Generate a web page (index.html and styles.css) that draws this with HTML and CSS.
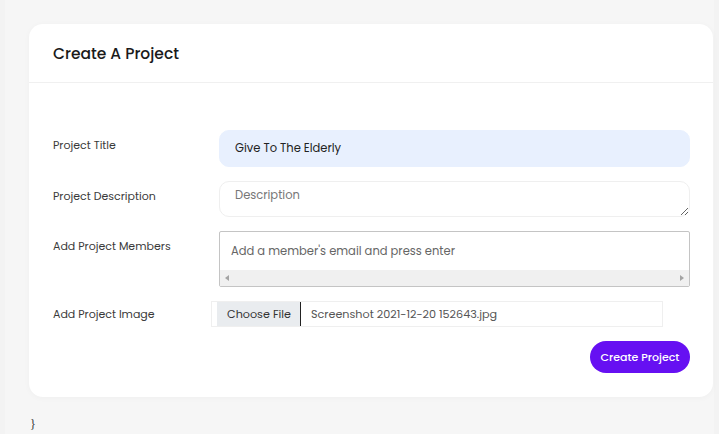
FILE: index.html
```html
<!DOCTYPE html>
<html lang="en">
<head>
<meta charset="utf-8">
<title>Create A Project</title>
<link rel="stylesheet" href="styles.css">
</head>
<body>
<main class="page">
  <section class="card">
    <header class="card-header">
      <h1 class="card-title">Create A Project</h1>
    </header>
    <form class="card-body">
      <div class="row">
        <label class="label">Project Title</label>
        <input class="field field-filled" type="text" value="Give To The Elderly">
      </div>
      <div class="row">
        <label class="label">Project Description</label>
        <textarea class="field field-area" placeholder="Description"></textarea>
      </div>
      <div class="row">
        <label class="label">Add Project Members</label>
        <div class="members">
          <div class="members-input">Add a member's email and press enter</div>
          <div class="hscroll">
            <span class="arrow arrow-left"></span>
            <span class="arrow arrow-right"></span>
          </div>
        </div>
      </div>
      <div class="row row-file">
        <label class="label">Add Project Image</label>
        <div class="file">
          <span class="file-btn">Choose File</span>
          <span class="file-name">Screenshot 2021-12-20 152643.jpg</span>
        </div>
      </div>
      <div class="actions">
        <button type="button" class="btn-primary">Create Project</button>
      </div>
    </form>
  </section>
  <div class="stray">}</div>
</main>
</body>
</html>
```
FILE: styles.css
```css
* { box-sizing: border-box; }
html, body { margin: 0; height: 100%; }
body {
  background: #f3f3f3;
  font-family: "Poppins", "Open Sans", "Noto Sans", sans-serif;
  color: #222;
  overflow: hidden;
}
.page {
  margin: 0 5px;
  min-height: 100%;
  background: #f6f6f6;
  padding: 24px 1px 0 24px;
}
.card {
  background: #fff;
  border-radius: 14px;
  box-shadow: 0 1px 6px rgba(0,0,0,0.03);
}
.card-header {
  height: 59px;
  padding: 0 24px;
  display: flex;
  align-items: center;
  border-bottom: 1px solid #f0f0f0;
}
.card-title {
  margin: 0;
  font-size: 15.5px;
  font-weight: 500;
  color: #1a1a1a;
}
.card-body {
  padding: 47px 23px 24px 24px;
  display: flex;
  flex-direction: column;
  gap: 14px;
}
.row {
  display: flex;
  align-items: flex-start;
}
.label {
  width: 166px;
  flex: none;
  font-size: 11px;
  color: #3a3a3a;
  padding-top: 7px;
}
.field {
  flex: 1;
  font-family: inherit;
  font-size: 11.5px;
  border-radius: 10px;
  outline: none;
}
.field-filled {
  height: 37px;
  background: #e8f0fe;
  border: 1px solid #e8f0fe;
  padding: 0 15px;
  color: #222;
}
.field-area {
  height: 36px;
  border: 1px solid #efefef;
  padding: 5px 15px;
  resize: vertical;
  background: #fff;
}
.field-area::placeholder { color: #777; }
.members {
  flex: 1;
  height: 56px;
  border: 1px solid #c4c4c4;
  border-radius: 2px;
  display: flex;
  flex-direction: column;
}
.members-input {
  flex: 1;
  font-size: 11.5px;
  color: #666;
  padding: 11px 11px 0;
}
.hscroll {
  height: 16px;
  background: #f0f0f0;
  display: flex;
  justify-content: space-between;
  align-items: center;
  padding: 0 5px;
}
.arrow {
  width: 0; height: 0;
  border-top: 3.5px solid transparent;
  border-bottom: 3.5px solid transparent;
}
.arrow-left { border-right: 4px solid #a3a3a3; }
.arrow-right { border-left: 4px solid #a3a3a3; }
.row-file .label { padding-top: 5px; }
.file {
  width: 452px;
  margin-left: -8px;
  height: 26px;
  border: 1px solid #efefef;
  display: flex;
  align-items: stretch;
  padding-left: 5px;
  font-size: 11.2px;
}
.file-btn {
  background: #e9ecef;
  border-right: 1px solid #222;
  color: #333;
  display: flex;
  align-items: center;
  padding: 0 9px 0 10px;
}
.file-name {
  display: flex;
  align-items: center;
  padding-left: 10px;
  color: #555;
}
.actions {
  display: flex;
  justify-content: flex-end;
}
.btn-primary {
  font-family: inherit;
  font-size: 11px;
  font-weight: 500;
  color: #fff;
  background: #6610f2;
  border: none;
  border-radius: 16px;
  height: 32px;
  width: 100px;
}
.stray {
  font-size: 12px;
  line-height: 14px;
  color: #333;
  padding: 20px 0 0 1px;
  font-family: "Liberation Serif", serif;
}
```
